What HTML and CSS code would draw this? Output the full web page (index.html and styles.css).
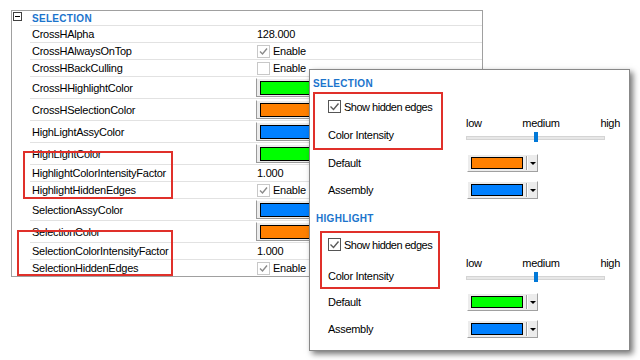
FILE: index.html
```html
<!DOCTYPE html>
<html lang="en">
<head>
    <meta charset="UTF-8">
    <title>Selection / Highlight options</title>
    <link rel="stylesheet" href="styles.css">
</head>
<body>
    <!-- Property grid -->
    <div class="grid">
        <div class="row head">
            <div class="gutter">
                <svg class="collapse" width="9" height="9" viewBox="0 0 9 9"><rect x="0.5" y="0.5" width="8" height="8" fill="#fff" stroke="#404040"/><path d="M2 4.5h5" stroke="#000"/></svg>
            </div>
            <div class="cells"><span class="cat">SELECTION</span></div>
        </div>
        <div class="row"><div class="gutter"></div><div class="cells"><span class="name">CrossHAlpha</span><span class="value">128.000</span></div></div>
        <div class="row"><div class="gutter"></div><div class="cells"><span class="name">CrossHAlwaysOnTop</span><span class="value"><span class="gbox"><svg width="11" height="11" viewBox="0 0 11 11"><path d="M2 5.5l2.5 2.5 4.5-5.5" fill="none" stroke="#8a8a8a" stroke-width="1.4"/></svg></span>Enable</span></div></div>
        <div class="row"><div class="gutter"></div><div class="cells"><span class="name">CrossHBackCulling</span><span class="value"><span class="gbox"></span>Enable</span></div></div>
        <div class="row tall"><div class="gutter"></div><div class="cells"><span class="name">CrossHHighlightColor</span><span class="cbtn"><span class="sw green"></span></span></div></div>
        <div class="row tall"><div class="gutter"></div><div class="cells"><span class="name">CrossHSelectionColor</span><span class="cbtn"><span class="sw orange"></span></span></div></div>
        <div class="row tall"><div class="gutter"></div><div class="cells"><span class="name">HighLightAssyColor</span><span class="cbtn"><span class="sw blue"></span></span></div></div>
        <div class="row tall"><div class="gutter"></div><div class="cells"><span class="name">HighLightColor</span><span class="cbtn"><span class="sw green"></span></span></div></div>
        <div class="row"><div class="gutter"></div><div class="cells"><span class="name">HighlightColorIntensityFactor</span><span class="value">1.000</span></div></div>
        <div class="row"><div class="gutter"></div><div class="cells"><span class="name">HighlightHiddenEdges</span><span class="value"><span class="gbox"><svg width="11" height="11" viewBox="0 0 11 11"><path d="M2 5.5l2.5 2.5 4.5-5.5" fill="none" stroke="#8a8a8a" stroke-width="1.4"/></svg></span>Enable</span></div></div>
        <div class="row tall"><div class="gutter"></div><div class="cells"><span class="name">SelectionAssyColor</span><span class="cbtn"><span class="sw blue"></span></span></div></div>
        <div class="row tall"><div class="gutter"></div><div class="cells"><span class="name">SelectionColor</span><span class="cbtn"><span class="sw orange"></span></span></div></div>
        <div class="row"><div class="gutter"></div><div class="cells"><span class="name">SelectionColorIntensityFactor</span><span class="value">1.000</span></div></div>
        <div class="row last"><div class="gutter"></div><div class="cells"><span class="name">SelectionHiddenEdges</span><span class="value"><span class="gbox"><svg width="11" height="11" viewBox="0 0 11 11"><path d="M2 5.5l2.5 2.5 4.5-5.5" fill="none" stroke="#8a8a8a" stroke-width="1.4"/></svg></span>Enable</span></div></div>
    </div>

    <!-- Marcas rojas sobre la tabla -->
    <div class="mark mark-a"></div>
    <div class="mark mark-b"></div>

    <!-- Options panel -->
    <div class="panel">
        <div class="title">SELECTION</div>
        <div class="opts">
            <div class="redbox">
                <div class="check-row">
                    <span class="cbox"><svg width="11" height="11" viewBox="0 0 11 11"><path d="M1.5 5.5l3 3 5-6" fill="none" stroke="#5a5a5a" stroke-width="1.4"/></svg></span>
                    <span class="clabel">Show hidden edges</span>
                </div>
                <div class="intensity">Color Intensity</div>
            </div>
            <div class="slider">
                <div class="ticks"><span>low</span><span>medium</span><span>high</span></div>
                <div class="track"><span class="thumb"></span></div>
            </div>
        </div>
        <div class="field">
            <span class="flabel">Default</span>
            <span class="dropdown"><span class="sw orange"></span><span class="sep"></span><span class="arrow"></span></span>
        </div>
        <div class="field">
            <span class="flabel">Assembly</span>
            <span class="dropdown"><span class="sw blue"></span><span class="sep"></span><span class="arrow"></span></span>
        </div>

        <div class="title second">HIGHLIGHT</div>
        <div class="opts second">
            <div class="redbox">
                <div class="check-row">
                    <span class="cbox"><svg width="11" height="11" viewBox="0 0 11 11"><path d="M1.5 5.5l3 3 5-6" fill="none" stroke="#5a5a5a" stroke-width="1.4"/></svg></span>
                    <span class="clabel">Show hidden edges</span>
                </div>
                <div class="intensity">Color Intensity</div>
            </div>
            <div class="slider">
                <div class="ticks"><span>low</span><span>medium</span><span>high</span></div>
                <div class="track"><span class="thumb"></span></div>
            </div>
        </div>
        <div class="field">
            <span class="flabel">Default</span>
            <span class="dropdown"><span class="sw green"></span><span class="sep"></span><span class="arrow"></span></span>
        </div>
        <div class="field">
            <span class="flabel">Assembly</span>
            <span class="dropdown"><span class="sw blue"></span><span class="sep"></span><span class="arrow"></span></span>
        </div>
    </div>
</body>
</html>
```

FILE: styles.css
```css
body {
    margin: 0;
    background: #fff;
    font-family: "Liberation Sans", Arial, sans-serif;
    font-size: 11px;
    color: #000;
    position: relative;
    width: 640px;
    height: 360px;
    overflow: hidden;
}

/* Tabla de propiedades */
.grid {
    margin: 10px 0 0 11px;
    width: 472px;
    box-sizing: border-box;
    border: 1px solid #a0a0a0;
    letter-spacing: -0.25px;
}
.row {
    display: flex;
    height: 17px;
}
.row.head {
    height: 15px;
}
.row.tall {
    height: 22px;
}
.row.last {
    height: 16px;
}
.gutter {
    width: 18px;
    flex-shrink: 0;
}
.collapse {
    display: block;
    margin: 1px 0 0 1px;
}
.cells {
    flex: 1;
    display: flex;
    align-items: center;
    border-bottom: 1px solid #e2e2e2;
    box-sizing: border-box;
    height: 100%;
}
.row.last .cells {
    border-bottom: none;
}
.cat {
    padding-left: 2px;
    font-weight: bold;
    font-size: 10px;
    letter-spacing: 0.3px;
    color: #1b74cc;
}
.name {
    width: 224px;
    padding-left: 2px;
    flex-shrink: 0;
}
.value {
    display: flex;
    align-items: center;
    padding-left: 1px;
}
.gbox {
    width: 13px;
    height: 13px;
    box-sizing: border-box;
    border: 1px solid #c8c8c8;
    margin-right: 3px;
    display: flex;
    align-items: center;
    justify-content: center;
}
.cbtn {
    display: flex;
    align-items: center;
    width: 90px;
    height: 19px;
    box-sizing: border-box;
    background: #ececec;
    border-left: 1px solid #9a9a9a;
    border-bottom: 1px solid #9a9a9a;
    border-top: 1px solid #fff;
    padding-left: 3px;
}
.cbtn .sw {
    width: 80px;
    height: 14px;
}
.sw {
    display: block;
    box-sizing: border-box;
    border: 1px solid #000;
}
.green { background: #00ff00; }
.orange { background: #ff8000; }
.blue { background: #0080ff; }

/* Recuadros rojos */
.mark {
    position: absolute;
    box-sizing: border-box;
    border: 2px solid #e0302a;
}
.mark-a {
    left: 23px;
    top: 151px;
    width: 150px;
    height: 48px;
}
.mark-b {
    left: 17px;
    top: 230px;
    width: 156px;
    height: 46px;
}

/* Panel de opciones */
.panel {
    position: absolute;
    left: 309px;
    top: 69px;
    width: 321px;
    height: 282px;
    box-sizing: border-box;
    border: 1px solid #888;
    background: #fff;
    box-shadow: 3px 3px 6px rgba(0, 0, 0, 0.55);
    z-index: 10;
    letter-spacing: -0.3px;
}
.title {
    margin: 6px 0 0 3px;
    height: 16px;
    line-height: 16px;
    font-weight: bold;
    font-size: 10px;
    letter-spacing: 0.3px;
    color: #1b74cc;
}
.title.second {
    margin: 12px 0 0 6px;
}
.opts {
    display: flex;
    height: 58px;
}
.opts.second {
    margin-top: 4px;
}
.redbox {
    display: flex;
    flex-direction: column;
    box-sizing: border-box;
    border: 2px solid #e0302a;
    width: 130px;
    margin-left: 3px;
    padding-left: 13px;
}
.opts.second .redbox {
    width: 120px;
    margin-left: 10px;
    padding-left: 6px;
}
.check-row {
    display: flex;
    align-items: center;
    height: 13px;
    margin-top: 6px;
}
.opts.second .check-row {
    margin-top: 5px;
}
.cbox {
    width: 13px;
    height: 13px;
    box-sizing: border-box;
    border: 1px solid #555;
    display: flex;
    align-items: center;
    justify-content: center;
}
.clabel {
    margin-left: 3px;
    letter-spacing: -0.5px;
    white-space: nowrap;
}
.intensity {
    height: 14px;
    line-height: 14px;
    margin-top: 15px;
}
.opts.second .intensity {
    margin-top: 18px;
}
.slider {
    margin-left: 23px;
    width: 154px;
    padding-top: 24px;
}
.opts.second .slider {
    margin-left: 26px;
    padding-top: 25px;
}
.ticks {
    display: flex;
    justify-content: space-between;
    height: 14px;
    line-height: 14px;
}
.track {
    position: relative;
    width: 139px;
    height: 4px;
    margin-top: 6px;
    box-sizing: border-box;
    background: #e7e7e7;
    border: 1px solid #d4d4d4;
}
.thumb {
    position: absolute;
    left: 67px;
    top: -5px;
    width: 4px;
    height: 10px;
    background: #0078d7;
}
.field {
    display: flex;
    align-items: center;
    height: 18px;
    margin-top: 4px;
    padding-left: 18px;
}
.field + .field {
    margin-top: 9px;
}
.flabel {
    width: 139px;
}
.dropdown {
    display: flex;
    align-items: center;
    width: 71px;
    height: 18px;
    box-sizing: border-box;
    background: #ececec;
    border: 1px solid;
    border-color: #fff #a0a0a0 #a0a0a0 #fff;
    padding-left: 3px;
}
.dropdown .sw {
    width: 52px;
    height: 12px;
}
.sep {
    width: 1px;
    height: 14px;
    margin-left: 3px;
    background: #a0a0a0;
    box-shadow: 1px 0 #fff;
}
.arrow {
    margin-left: 3px;
    width: 0;
    height: 0;
    border-left: 3px solid transparent;
    border-right: 3px solid transparent;
    border-top: 3px solid #000;
}
```
